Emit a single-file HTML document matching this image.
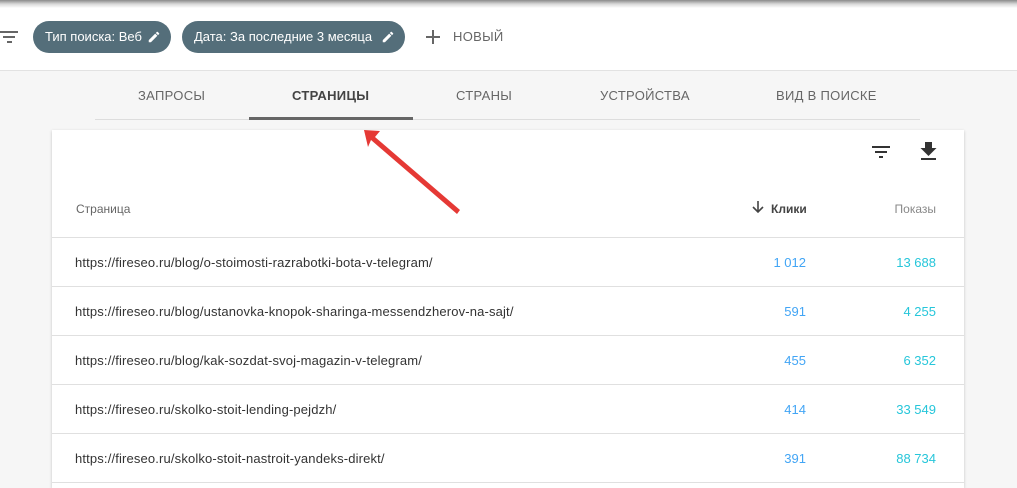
<!DOCTYPE html>
<html><head><meta charset="utf-8"><style>
*{margin:0;padding:0;box-sizing:border-box}
html,body{width:1017px;height:488px;overflow:hidden}
body{background:#f6f6f6;font-family:"Liberation Sans",sans-serif;position:relative}
.top{position:absolute;left:0;top:0;width:1017px;height:71px;background:#fff;border-bottom:1px solid #e2e2e2}
.shadow{position:absolute;left:0;top:0;width:1017px;height:8px;background:linear-gradient(#8a8a8a,#d8d8d8 50%,#fff)}
.chip{position:absolute;top:21px;height:32px;border-radius:16px;background:#546e7a;color:#fff;font-size:13px;line-height:32px;padding-left:12px}
.chip svg{position:absolute;right:10px;top:9px}
.tabs{position:absolute;left:95px;top:72px;width:825px;height:48px;border-bottom:1px solid #ddd}
.tab{position:absolute;top:16px;font-size:13px;color:#666;letter-spacing:.3px}
.card{position:absolute;left:52px;top:130px;width:912px;height:358px;background:#fff;box-shadow:0 1px 3px rgba(0,0,0,.2);overflow:hidden}
.row{position:absolute;left:0;width:912px;height:49px;border-top:1px solid #e0e0e0;font-size:13px}
.row span{position:absolute;top:17px}
.u{left:23px;color:#333;letter-spacing:.15px}
.c{right:158px;color:#42a5f5;text-align:right}
.p{right:28px;color:#26c6da;text-align:right}
</style></head><body>
<div class="top"><div class="shadow"></div>
<svg style="position:absolute;left:0;top:29px" width="18" height="16"><rect x="0" y="2" width="18" height="2" fill="#666"/><rect x="3" y="7" width="12" height="2" fill="#666"/><rect x="7" y="12" width="5" height="2" fill="#666"/></svg>
<div class="chip" style="left:33px;width:138px">Тип поиска: Веб<svg width="14" height="14" viewBox="0 0 24 24"><path d="M3 17.25V21h3.75L17.8 9.94l-3.75-3.75L3 17.25zM20.7 7.04a1 1 0 000-1.41l-2.34-2.34a1 1 0 00-1.41 0l-1.83 1.83 3.75 3.75 1.83-1.83z" fill="#fff"/></svg></div>
<div class="chip" style="left:182px;width:223px">Дата: За последние 3 месяца<svg width="14" height="14" viewBox="0 0 24 24"><path d="M3 17.25V21h3.75L17.8 9.94l-3.75-3.75L3 17.25zM20.7 7.04a1 1 0 000-1.41l-2.34-2.34a1 1 0 00-1.41 0l-1.83 1.83 3.75 3.75 1.83-1.83z" fill="#fff"/></svg></div>
<svg style="position:absolute;left:426px;top:30px" width="14" height="14"><rect x="6" y="0" width="2" height="14" fill="#666"/><rect x="0" y="6" width="14" height="2" fill="#666"/></svg>
<div style="position:absolute;left:453px;top:29px;font-size:13px;color:#666;letter-spacing:.3px">НОВЫЙ</div>
</div>
<div class="tabs">
<div class="tab" style="left:43px">ЗАПРОСЫ</div>
<div class="tab" style="left:197px;color:#444;font-weight:bold">СТРАНИЦЫ</div>
<div class="tab" style="left:361px">СТРАНЫ</div>
<div class="tab" style="left:505px">УСТРОЙСТВА</div>
<div class="tab" style="left:681px">ВИД В ПОИСКЕ</div>
<div style="position:absolute;left:154px;top:45px;width:164px;height:3px;background:#666"></div>
</div>
<div class="card">
<svg style="position:absolute;left:820px;top:16px" width="18" height="12"><rect x="0" y="0" width="18" height="2" fill="#333"/><rect x="3" y="5" width="12" height="2" fill="#333"/><rect x="7" y="10" width="4" height="2" fill="#333"/></svg>
<svg style="position:absolute;left:868px;top:12px" width="17" height="18" viewBox="0 0 17 18"><path d="M5 0h7v6h4.5L8.5 14 0.5 6H5z" fill="#333"/><rect x="1" y="16" width="15" height="2" fill="#333"/></svg>
<div style="position:absolute;left:24px;top:72px;font-size:12px;color:#666">Страница</div>
<svg style="position:absolute;left:700px;top:71px" width="12" height="13"><path d="M6 0v11M1 6l5 5 5-5" stroke="#444" stroke-width="1.6" fill="none"/></svg>
<div style="position:absolute;left:719px;top:72px;font-size:12px;color:#444;font-weight:bold">Клики</div>
<div style="position:absolute;right:28px;top:72px;font-size:12px;color:#888">Показы</div>
<div class="row" style="top:107px"><span class="u">https://fireseo.ru/blog/o-stoimosti-razrabotki-bota-v-telegram/</span><span class="c">1 012</span><span class="p">13 688</span></div>
<div class="row" style="top:156px"><span class="u">https://fireseo.ru/blog/ustanovka-knopok-sharinga-messendzherov-na-sajt/</span><span class="c">591</span><span class="p">4 255</span></div>
<div class="row" style="top:205px"><span class="u">https://fireseo.ru/blog/kak-sozdat-svoj-magazin-v-telegram/</span><span class="c">455</span><span class="p">6 352</span></div>
<div class="row" style="top:254px"><span class="u">https://fireseo.ru/skolko-stoit-lending-pejdzh/</span><span class="c">414</span><span class="p">33 549</span></div>
<div class="row" style="top:303px"><span class="u">https://fireseo.ru/skolko-stoit-nastroit-yandeks-direkt/</span><span class="c">391</span><span class="p">88 734</span></div>
<div class="row" style="top:352px;height:6px"></div>
</div>
<svg style="position:absolute;left:0;top:0" width="1017" height="488"><path d="M364 130 L380 131 L375 137 L460 210 L457 214 L371 140 L368 147 Z" fill="#e53935"/></svg>
</body></html>
